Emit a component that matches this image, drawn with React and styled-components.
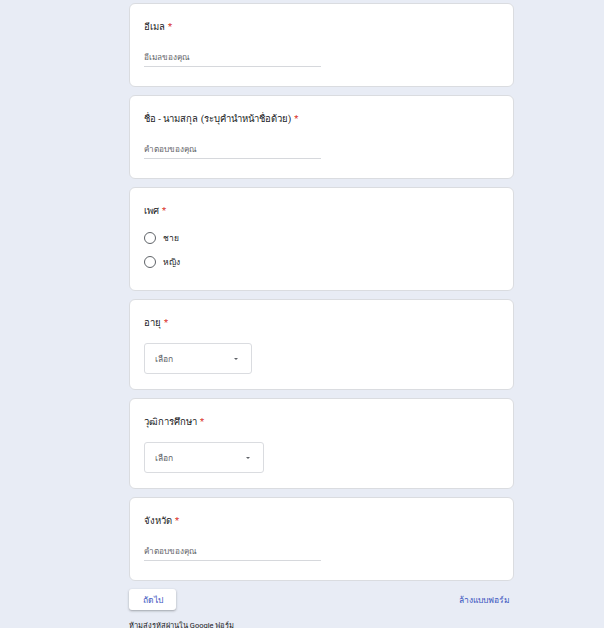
import React from "react";
import styled, { createGlobalStyle } from "styled-components";

const GlobalStyle = createGlobalStyle`
  html, body {
    margin: 0;
    padding: 0;
    background: #e8ecf5;
    font-family: Roboto, "Noto Sans", "DejaVu Sans", sans-serif;
    color: #202124;
  }
`;

const Page = styled.div`
  width: 385px;
  margin-left: 129px;
  padding-top: 3px;
`;

const Cards = styled.div`
  display: flex;
  flex-direction: column;
  gap: 8px;
`;

const Card = styled.div`
  background: #fff;
  border: 1px solid #dadce0;
  border-radius: 6px;
  padding: 14px 14px ${(p) => p.$bottom || 19}px;
  box-sizing: border-box;
`;

const Title = styled.div`
  height: 18px;
  font-size: 9.5px;
  line-height: 18px;
  color: #202124;
`;

const Star = styled.span`
  color: #d93025;
  margin-left: 3px;
`;

const Input = styled.div`
  width: 177px;
  margin-top: 14px;
  height: 16px;
  font-size: 8.2px;
  line-height: 15px;
  color: #5f6368;
  border-bottom: 1px solid #d6d8dc;
`;

const Radios = styled.div`
  display: flex;
  flex-direction: column;
  margin-top: 6px;
`;

const RadioRow = styled.div`
  display: flex;
  align-items: center;
  height: 24px;
  font-size: 8.5px;
  color: #202124;
`;

const Circle = styled.span`
  width: 10px;
  height: 10px;
  border: 1.5px solid #5f6368;
  border-radius: 50%;
  margin-right: 7px;
`;

const Select = styled.div`
  width: ${(p) => p.$w}px;
  height: 31px;
  margin-top: 11px;
  box-sizing: border-box;
  border: 1px solid #dadce0;
  border-radius: 3px;
  display: flex;
  align-items: center;
  justify-content: space-between;
  padding: 0 13px 0 10px;
  font-size: 8.5px;
  color: #5f6368;
`;

const Arrow = styled.span`
  width: 0;
  height: 0;
  border-left: 2.5px solid transparent;
  border-right: 2.5px solid transparent;
  border-top: 2.5px solid #5f6368;
`;

const Actions = styled.div`
  display: flex;
  align-items: center;
  justify-content: space-between;
  margin-top: 8px;
`;

const NextButton = styled.button`
  width: 47px;
  height: 21px;
  background: #fff;
  border: none;
  border-radius: 3px;
  box-shadow: 0 1px 2px rgba(60, 64, 67, 0.3), 0 1px 3px rgba(60, 64, 67, 0.15);
  color: #3b55c0;
  font-family: inherit;
  font-size: 8.5px;
  font-weight: 500;
  padding: 0;
`;

const ClearLink = styled.span`
  color: #3b55c0;
  font-size: 8.5px;
  font-weight: 500;
  margin-right: 4px;
`;

const Footer = styled.div`
  margin-top: 11px;
  font-size: 7.5px;
  line-height: 10px;
  color: #202124;
`;

const Required = ({ children }) => (
  <Title>
    {children}
    <Star>*</Star>
  </Title>
);

const App = () => (
  <>
    <GlobalStyle />
    <Page>
      <Cards>
        <Card>
          <Required>อีเมล</Required>
          <Input>อีเมลของคุณ</Input>
        </Card>
        <Card>
          <Required>ชื่อ - นามสกุล (ระบุคำนำหน้าชื่อด้วย)</Required>
          <Input>คำตอบของคุณ</Input>
        </Card>
        <Card $bottom={16}>
          <Required>เพศ</Required>
          <Radios>
            <RadioRow>
              <Circle />
              ชาย
            </RadioRow>
            <RadioRow>
              <Circle />
              หญิง
            </RadioRow>
          </Radios>
        </Card>
        <Card $bottom={15}>
          <Required>อายุ</Required>
          <Select $w={108}>
            เลือก
            <Arrow />
          </Select>
        </Card>
        <Card $bottom={15}>
          <Required>วุฒิการศึกษา</Required>
          <Select $w={120}>
            เลือก
            <Arrow />
          </Select>
        </Card>
        <Card>
          <Required>จังหวัด</Required>
          <Input>คำตอบของคุณ</Input>
        </Card>
      </Cards>
      <Actions>
        <NextButton>ถัดไป</NextButton>
        <ClearLink>ล้างแบบฟอร์ม</ClearLink>
      </Actions>
      <Footer>ห้ามส่งรหัสผ่านใน Google ฟอร์ม</Footer>
    </Page>
  </>
);

export default App;
